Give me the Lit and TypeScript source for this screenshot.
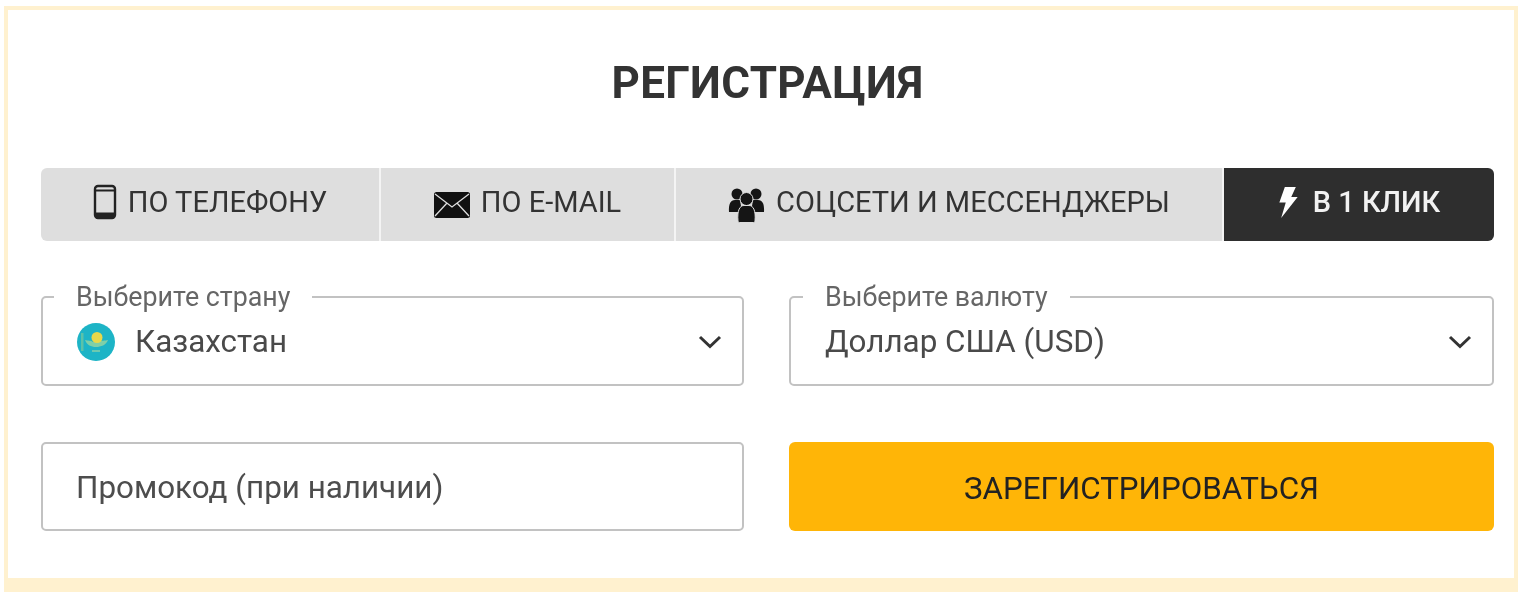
import { LitElement, html, css, svg } from "lit";
import { customElement } from "lit/decorators.js";

const phone = svg`<svg class="ic" width="24" height="36" viewBox="0 0 24 36"><rect x="2" y="2" width="20" height="32" rx="3" fill="none" stroke="#222" stroke-width="2.4"/><path d="M2 6.5h20M2 29.5h20" stroke="#222" stroke-width="2"/><path d="M3 30h18v3H3z" fill="#222"/></svg>`;
const mail = svg`<svg class="ic mail" width="36" height="26" viewBox="0 0 36 26"><rect x="0" y="0" width="36" height="26" rx="2.5" fill="#111"/><path d="M1 2l17 13L35 2M1 24l12-13M35 24L23 11" fill="none" stroke="#ddd" stroke-width="1.3"/></svg>`;
const users = svg`<svg class="ic users" width="37" height="36" viewBox="0 0 37 36" fill="#151515"><circle cx="9" cy="7" r="5.500"/><circle cx="28" cy="7" r="5.500"/><path d="M1 25c-.5-8 1.500-12 6-12h5l2 12H1zM36 25c.5-8-1.500-12-6-12h-5l-2 12h13z"/><circle cx="18.500" cy="12" r="6.500" stroke="#ddd" stroke-width="1"/><path d="M10 34c-1-11 2-15.500 6-15.500h5c4 0 7 4.500 6 15.500 0 .7-.6 1.500-1.500 1.500h-14c-.9 0-1.500-.8-1.500-1.500z" stroke="#ddd" stroke-width="1"/></svg>`;
const bolt = svg`<svg class="ic" width="21" height="33" viewBox="0 0 22 36"><path d="M7 1h12l-5 11h7L3 35l5-17H1z" fill="#fff"/></svg>`;
const chevron = svg`<svg width="24" height="14" viewBox="0 0 24 14"><path d="M2 2l10 9.500L22 2" fill="none" stroke="#333" stroke-width="3"/></svg>`;
const flag = svg`<svg class="flag" width="38" height="38" viewBox="0 0 38 38"><circle cx="19" cy="19" r="19" fill="#1db4c6"/><path d="M8 17c3 1 6 0 8 2h6c2-2 6-1 9-2-2 5-7 7-12 7S10 22 8 17z" fill="#7fcfa8"/><circle cx="20" cy="14.500" r="5.500" fill="#e8d84a"/><path d="M4 10h2.500v18H4z" fill="#5cc2a8"/><path d="M15 27h8v2h-8z" fill="#6cc9b0"/></svg>`;

@customElement("app-root")
export class AppRoot extends LitElement {
  static styles = css`
    :host { display: block; width: 1524px; height: 592px; background: #fff; overflow: hidden;
      font-family: Roboto, "Liberation Sans", sans-serif; color: #333; }
    .frame { box-sizing: border-box; height: 586px; margin: 6px 6px 0 4px; background: #fff;
      border: solid #fff1cf; border-width: 4px 4px 14px 4px; padding: 0 20px 0 33px; }
    .soft { filter: blur(0.6px); display: flex; flex-direction: column; }
    h1 { margin: 0; height: 158px; display: flex; align-items: center; justify-content: center;
      padding-bottom: 12px; box-sizing: border-box; font-size: 44px; font-weight: 700; color: #333; letter-spacing: 0.3px; }
    .tabs { display: grid; grid-template-columns: 340px 295px 548px 1fr; height: 73px; border-radius: 6px; overflow: hidden; }
    .tab { display: flex; align-items: center; justify-content: center; gap: 11px; background: #dedede;
      font-size: 29px; color: #333; border-right: 2px solid #f4f4f4; padding-bottom: 5px; box-sizing: border-box; }
    .tab.active { background: #2e2e2e; color: #f2f2f2; font-weight: 500; border-right: 0; gap: 14px; }
    .mail { margin-top: 6px; }
    .users { margin-top: 5px; }
    .grid { display: grid; grid-template-columns: 703px 705px; column-gap: 45px; margin-top: 42px; row-gap: 56px; }
    fieldset { margin: 0; padding: 0 20px 0 34px; height: 103px; box-sizing: border-box; min-width: 0;
      border: 2px solid #c2c2c2; border-radius: 5px; display: flex; align-items: center; justify-content: space-between; }
    fieldset + fieldset legend { margin-left: -22px; }
    legend { margin-left: -23px; padding: 0 22px; font-size: 26.8px; line-height: 28px; color: #666; }
    .value { font-size: 31.4px; color: #4a4a4a; display: flex; align-items: center; gap: 20px; margin-top: -12px; }
    .flag { filter: blur(0.6px); }
    .chev { display: flex; margin-top: -12px; }
    .promo { height: 89px; box-sizing: border-box; border: 2px solid #c2c2c2; border-radius: 5px;
      padding: 2px 0 0 33px; display: flex; align-items: center; font-size: 31.4px; color: #4d4d4d; }
    .go { height: 89px; box-sizing: border-box; padding-top: 3px; background: #ffb507; border-radius: 6px; display: flex; align-items: center;
      justify-content: center; font-size: 31.3px; color: #222; }
    .ic { flex: none; }
  `;
  render() {
    return html`<div class="frame"><div class="soft">
      <h1>РЕГИСТРАЦИЯ</h1>
      <div class="tabs">
        <div class="tab">${phone}<span>ПО ТЕЛЕФОНУ</span></div>
        <div class="tab">${mail}<span>ПО E-MAIL</span></div>
        <div class="tab">${users}<span>СОЦСЕТИ И МЕССЕНДЖЕРЫ</span></div>
        <div class="tab active">${bolt}<span>В 1 КЛИК</span></div>
      </div>
      <div class="grid">
        <fieldset><legend>Выберите страну</legend>
          <div class="value">${flag}<span>Казахстан</span></div><div class="chev">${chevron}</div></fieldset>
        <fieldset><legend>Выберите валюту</legend>
          <div class="value"><span>Доллар США (USD)</span></div><div class="chev">${chevron}</div></fieldset>
        <div class="promo">Промокод (при наличии)</div>
        <div class="go">ЗАРЕГИСТРИРОВАТЬСЯ</div>
      </div>
    </div></div>`;
  }
}
